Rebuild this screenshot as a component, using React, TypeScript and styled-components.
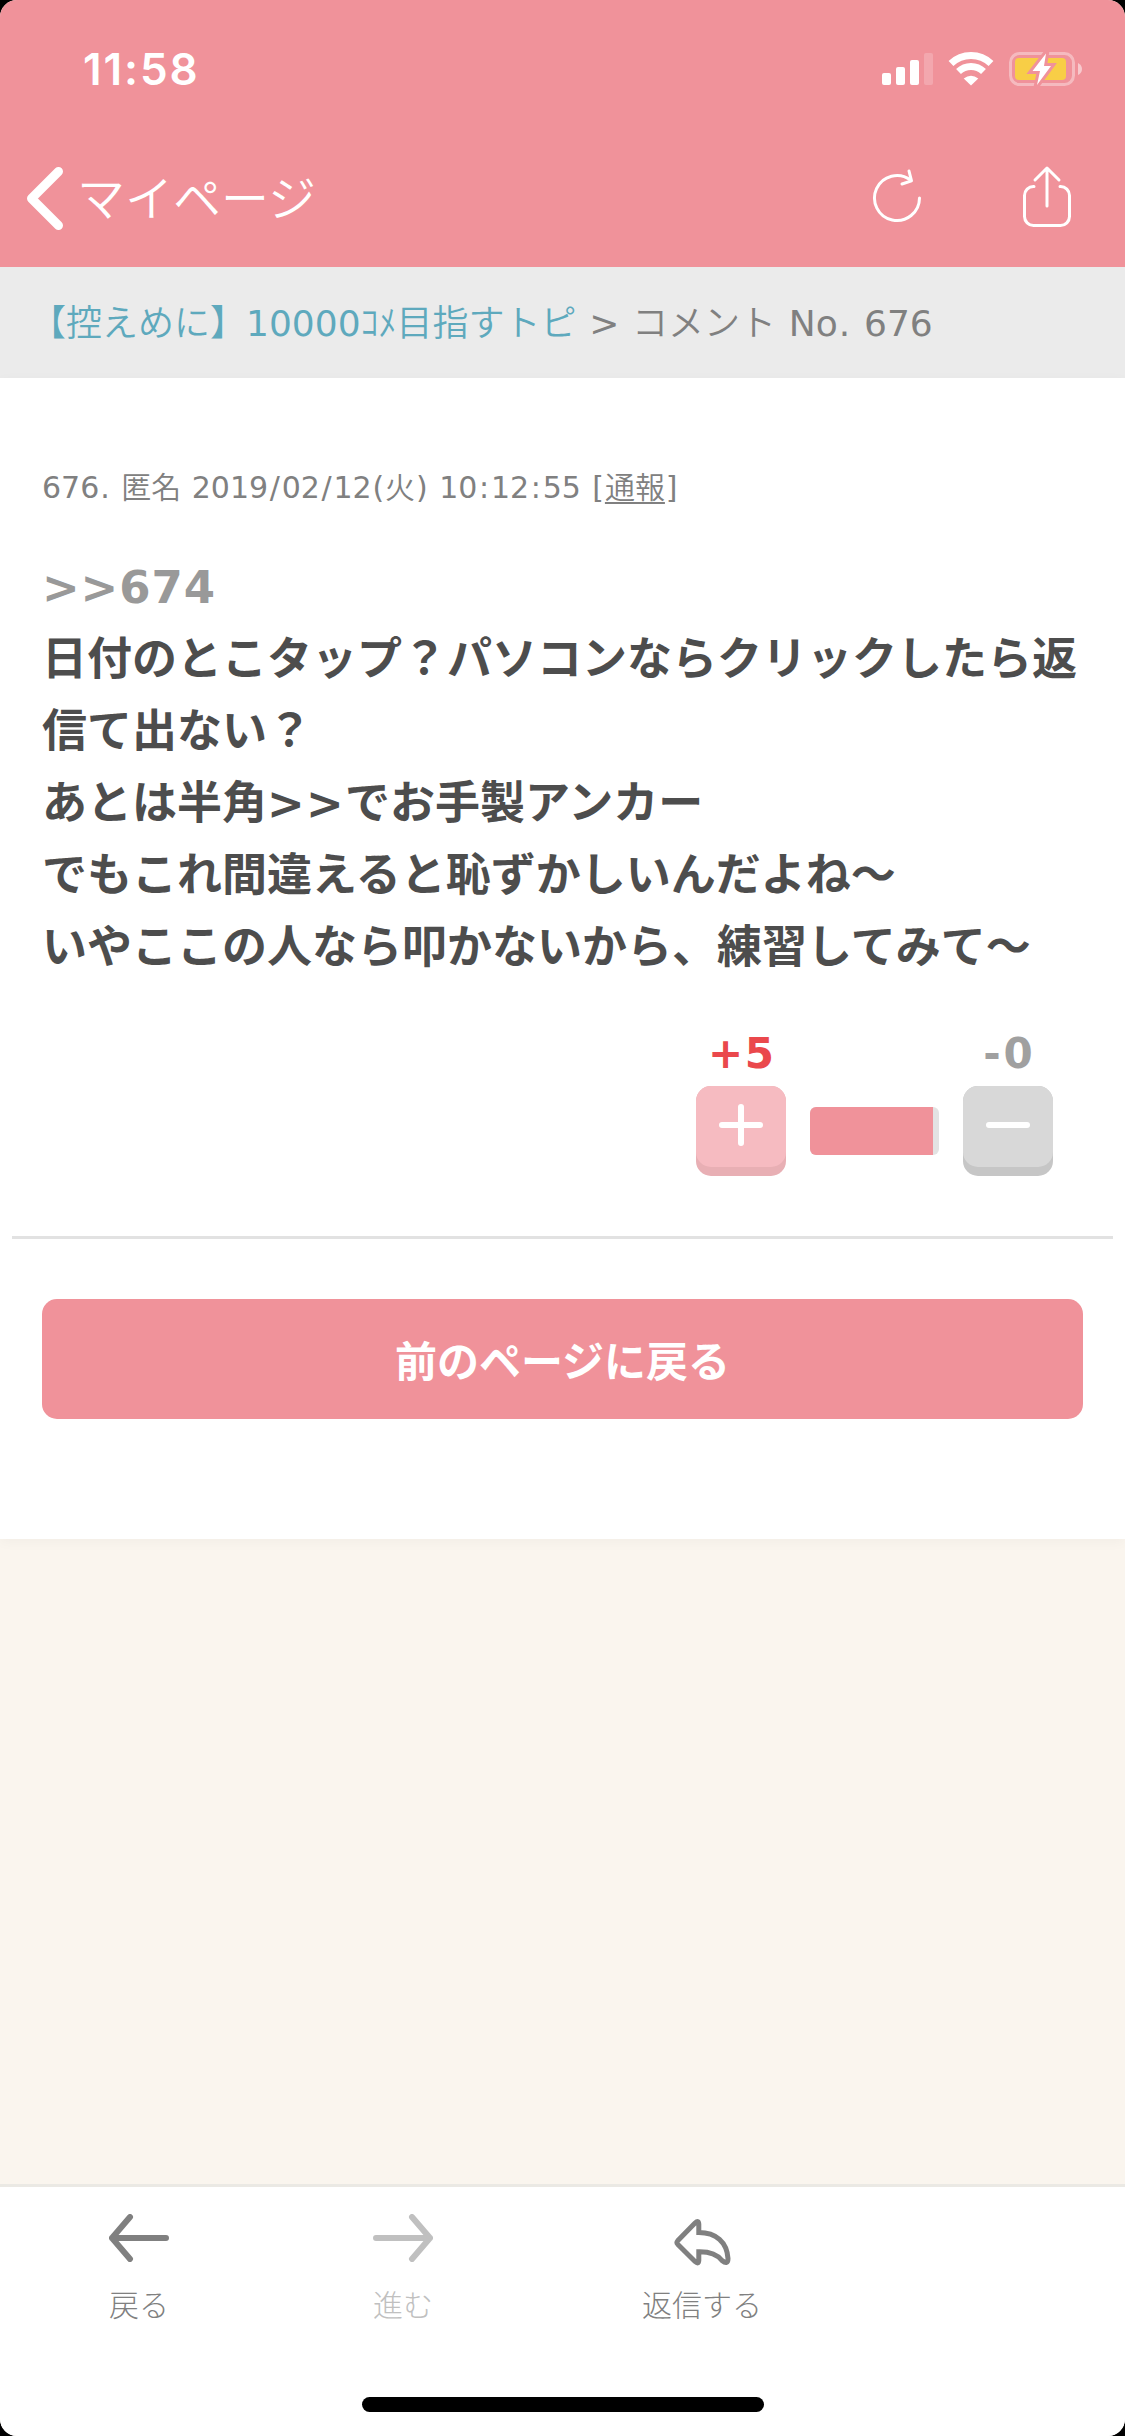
import React from "react";
import styled, { createGlobalStyle } from "styled-components";

const PINK = "#f0929a";
const GRAY = "#808080";

const GlobalStyle = createGlobalStyle`
  *, *::before, *::after { box-sizing: border-box; }
  html, body { margin: 0; padding: 0; background: #000; }
  body { font-family: "DejaVu Sans", "Noto Sans CJK JP", sans-serif; }
  svg { display: block; flex: none; }
  button { border: 0; padding: 0; margin: 0; background: none; font: inherit; color: inherit; }
`;

const Screen = styled.div`
  width: 1125px;
  height: 2436px;
  display: flex;
  flex-direction: column;
  overflow: hidden;
  border-radius: 17px;
  background: #faf5ee;
`;

const Header = styled.header`
  height: 267px;
  flex: none;
  background: ${PINK};
  color: #fff;
`;

const StatusBar = styled.div`
  height: 138px;
  display: flex;
  align-items: center;
  justify-content: space-between;
  padding: 0 43px 0 83px;
`;

const Clock = styled.span`
  font-family: Inter, sans-serif;
  font-size: 44px;
  font-weight: 600;
  letter-spacing: 1.9px;
  line-height: 1;
`;

const StatusIcons = styled.div`
  display: flex;
  align-items: center;
  gap: 15px;
`;

const NavBar = styled.nav`
  height: 120px;
  display: flex;
  align-items: center;
  justify-content: space-between;
  padding: 0 48px 0 27px;
`;

const BackButton = styled.button`
  display: flex;
  align-items: center;
  gap: 15px;
  font-family: "Noto Sans CJK JP", sans-serif;
  font-size: 48px;
  font-weight: 350;
  line-height: 60px;
`;

const BackLabel = styled.span`
  margin-left: -1px;
  padding-bottom: 6px;
`;

const NavActions = styled.div`
  display: flex;
  align-items: center;
  gap: 90px;
`;

const Breadcrumb = styled.div`
  height: 111px;
  flex: none;
  display: flex;
  align-items: center;
  padding: 2px 30px 0;
  background: #ebebeb;
  color: ${GRAY};
  font-size: 36px;
  line-height: 54px;
  word-spacing: 0.034em;
  white-space: pre;
`;

const TopicLink = styled.a`
  color: #5ea9bd;
`;

const Jp = styled.span`
  font-family: "Noto Sans CJK JP", sans-serif;
  font-weight: 350;
  line-height: 1;
`;

const Content = styled.main`
  height: 1161px;
  flex: none;
  display: flex;
  flex-direction: column;
  background: #fff;
  box-shadow: 0 3px 12px rgba(0, 0, 0, 0.035);
`;

const Meta = styled.div`
  padding: 87px 42px 0;
  height: 174px;
  color: ${GRAY};
  font-size: 30px;
  line-height: 45px;
  word-spacing: 0.034em;
  white-space: pre;
`;

const Mark = styled.span<{ $pad: number }>`
  padding: 0 ${(p) => p.$pad}em;
`;

const Report = styled.a`
  text-decoration: underline;
  text-decoration-thickness: 2px;
  text-underline-offset: 4px;
`;

const Comment = styled.div`
  padding: 0 42px;
  color: #4d4d4d;
  font-size: 45px;
  font-weight: 700;
  line-height: 72px;
`;

const Line = styled.div`
  height: 72px;
  white-space: nowrap;
`;

const Anchor = styled.a`
  color: #999;
  letter-spacing: 0.9px;
`;

const Arrows = styled.span`
  letter-spacing: 0.029em;
`;

const Votes = styled.div`
  display: flex;
  justify-content: flex-end;
  align-items: flex-end;
  gap: 24px;
  height: 192px;
  padding-right: 72px;
`;

const Vote = styled.div`
  width: 90px;
  display: flex;
  flex-direction: column;
  align-items: center;
  gap: 8px;
`;

const Count = styled.span<{ $color: string; $spacing: number }>`
  color: ${(p) => p.$color};
  font-size: 42px;
  font-weight: 700;
  letter-spacing: ${(p) => p.$spacing}px;
  margin-right: -${(p) => p.$spacing}px;
  line-height: 48px;
`;

const VoteButton = styled.button<{ $face: string; $edge: string }>`
  width: 90px;
  height: 90px;
  display: flex;
  justify-content: center;
  padding-top: 18px;
  border-radius: 15px;
  background: ${(p) => p.$edge};
  position: relative;

  &::before {
    content: "";
    position: absolute;
    inset: 0 0 9px;
    border-radius: 15px;
    background: ${(p) => p.$face};
  }

  svg { position: relative; }
`;

const Meter = styled.div`
  width: 129px;
  height: 48px;
  margin-bottom: 21px;
  border-radius: 6px;
  overflow: hidden;
  background: #e3e3e3;
`;

const MeterFill = styled.div`
  width: 123px;
  height: 48px;
  background: ${PINK};
`;

const Divider = styled.hr`
  width: 1101px;
  height: 3px;
  flex: none;
  margin: 60px 12px;
  border: 0;
  background: #e2e2e2;
`;

const ReturnButton = styled.button`
  height: 120px;
  margin: 0 42px;
  border-radius: 15px;
  background: ${PINK};
  color: #fff;
  font-family: "Noto Sans CJK JP", sans-serif;
  font-size: 42px;
  font-weight: 700;
  line-height: 120px;
`;

const Spacer = styled.div`
  flex: 1;
`;

const Toolbar = styled.footer`
  height: 252px;
  flex: none;
  display: flex;
  flex-direction: column;
  align-items: center;
  justify-content: space-between;
  padding-bottom: 24px;
  border-top: 3px solid #ebe9e4;
  background: #fff;
`;

const Tabs = styled.div`
  width: 1125px;
  display: flex;
  padding-left: 7px;
`;

const Tab = styled.button<{ $width: number; $color: string }>`
  width: ${(p) => p.$width}px;
  height: 150px;
  display: flex;
  flex-direction: column;
  align-items: center;
  padding-top: 27px;
  gap: 19px;
  color: ${(p) => p.$color};
  font-family: "Noto Sans CJK JP", sans-serif;
  font-size: 30px;
  font-weight: 300;
  line-height: 45px;
`;

const ReplyGlyph = styled.svg`
  margin: 4px 0 -4px;
`;

const HomeIndicator = styled.div`
  width: 402px;
  height: 15px;
  border-radius: 8px;
  background: #000;
`;

const SignalIcon = () => (
  <svg width="51" height="34" viewBox="0 0 51 34" fill="#fff">
    <rect x="0" y="21" width="9" height="12" rx="2" />
    <rect x="14" y="15" width="9" height="18" rx="2" />
    <rect x="28" y="8" width="9" height="25" rx="2" />
    <rect x="42" y="1" width="9" height="32" rx="2" opacity="0.2" />
  </svg>
);

const WifiIcon = () => (
  <svg width="46" height="34" viewBox="0 0 46 34" fill="none" stroke="#fff" strokeWidth="7">
    <path d="M3 11.5 A29 29 0 0 1 43 11.5" />
    <path d="M10.5 19.5 A18 18 0 0 1 35.5 19.5" />
    <path d="M15.7 26.5 Q23 21 30.3 26.5 L23 33.5 Z" fill="#fff" stroke="none" />
  </svg>
);

const BatteryIcon = () => (
  <svg width="73" height="34" viewBox="0 0 73 34">
    <rect x="1.5" y="1.5" width="63" height="31" rx="9" fill="none" stroke="#fff" strokeOpacity="0.37" strokeWidth="3" />
    <path d="M69 11 Q73 13 73 17 Q73 21 69 23 Z" fill="#fff" fillOpacity="0.5" />
    <rect x="6" y="6" width="51" height="22" rx="4" fill="#f8ce46" />
    <path d="M37 1.5 L23.5 19 H31 L28 33 L42 14 H35 Z" fill="#fff" stroke={PINK} strokeWidth="6" strokeLinejoin="miter" strokeMiterlimit="10" paintOrder="stroke" />
  </svg>
);

const ChevronIcon = () => (
  <svg width="36" height="63" viewBox="0 0 36 63" fill="none" stroke="#fff" strokeWidth="9" strokeLinecap="round" strokeLinejoin="round">
    <path d="M31.5 4.5 L4.5 31.5 L31.5 58.5" />
  </svg>
);

const RefreshIcon = () => (
  <svg width="60" height="66" viewBox="0 0 60 66" fill="none" stroke="#fff" strokeWidth="3" strokeLinecap="round" strokeLinejoin="round">
    <path d="M52.5 33 A22.5 22.5 0 1 1 43.5 15" />
    <path d="M42 6 L44.5 15.8 L35 19" />
  </svg>
);

const ShareIcon = () => (
  <svg width="60" height="66" viewBox="0 0 60 66" fill="none" stroke="#fff" strokeWidth="3" strokeLinecap="round" strokeLinejoin="round">
    <path d="M17 21.5 H16.5 A9 9 0 0 0 7.5 30.5 V51.5 A9 9 0 0 0 16.5 60.5 H43.5 A9 9 0 0 0 52.5 51.5 V30.5 A9 9 0 0 0 43.5 21.5 H43" />
    <path d="M30 41 V4 M18 15 L30 3 L42 15" />
  </svg>
);

const PlusIcon = () => (
  <svg width="44" height="42" viewBox="0 0 44 42" stroke="#fff" strokeWidth="6" strokeLinecap="round">
    <path d="M3 21 H41 M22 3 V39" />
  </svg>
);

const MinusIcon = () => (
  <svg width="44" height="42" viewBox="0 0 44 42" stroke="#fff" strokeWidth="6" strokeLinecap="round">
    <path d="M3 21 H41" />
  </svg>
);

const ArrowIcon = ({ forward = false }: { forward?: boolean }) => (
  <svg width="60" height="48" viewBox="0 0 60 48" fill="none" stroke="currentColor" strokeWidth="6" strokeLinecap="round" strokeLinejoin="round">
    <path d={forward ? "M3 24 H57 M39 3 L57 24 L39 45" : "M57 24 H3 M21 3 L3 24 L21 45"} />
  </svg>
);

const ReplyIcon = () => (
  <ReplyGlyph width="57" height="48" viewBox="0 0 57 48" fill="none" stroke="currentColor" strokeWidth="5">
    <path d="M24.8 14.5 V6 Q24.6 1.8 21 5 L3.7 22.8 Q2.2 24.5 3.7 26.2 L21 43.5 Q24.6 46.8 24.8 42.5 V33.7 C36 33.5 43 36 48 42.5 Q54 47.5 54 40.5 C53 24 42 14.5 24.8 14.5 Z" />
  </ReplyGlyph>
);

/* Gives date and bracket punctuation a wider set than the digits around it. */
const Stamp = ({ text }: { text: string }) => (
  <>
    {text.split(/([/:.()[\]])/).map((part, i) => {
      if (part === "/" || part === ":") return <Mark key={i} $pad={0.058}>{part}</Mark>;
      if (/^[.()[\]]$/.test(part)) return <Mark key={i} $pad={0.03}>{part}</Mark>;
      return part;
    })}
  </>
);

export default function App() {
  return (
    <>
      <GlobalStyle />
      <Screen>
        <Header>
          <StatusBar>
            <Clock>11:58</Clock>
            <StatusIcons>
              <SignalIcon />
              <WifiIcon />
              <BatteryIcon />
            </StatusIcons>
          </StatusBar>
          <NavBar>
            <BackButton>
              <ChevronIcon />
              <BackLabel>マイページ</BackLabel>
            </BackButton>
            <NavActions>
              <RefreshIcon />
              <ShareIcon />
            </NavActions>
          </NavBar>
        </Header>
        <Breadcrumb>
          <TopicLink><Jp>【控えめに】</Jp>10000<Jp>ｺﾒ目指すトピ</Jp></TopicLink>
          <span>{" > "}<Jp>コメント</Jp>{" No"}<Stamp text="." />{" 676"}</span>
        </Breadcrumb>
        <Content>
          <Meta>
            <Stamp text="676. " /><Jp>匿名</Jp><Stamp text=" 2019/02/12(" /><Jp>火</Jp><Stamp text=") 10:12:55 [" /><Report><Jp>通報</Jp></Report><Stamp text="]" />
          </Meta>
          <Comment>
            <Line><Anchor>&gt;&gt;674</Anchor></Line>
            <Line>日付のとこタップ？パソコンならクリックしたら返</Line>
            <Line>信て出ない？</Line>
            <Line>あとは半角<Arrows>&gt;&gt;</Arrows>でお手製アンカー</Line>
            <Line>でもこれ間違えると恥ずかしいんだよね〜</Line>
            <Line>いやここの人なら叩かないから、練習してみて〜</Line>
          </Comment>
          <Votes>
            <Vote>
              <Count $color="#ea484c" $spacing={1.5}>+5</Count>
              <VoteButton $face="#f6bbc1" $edge="#e8afb4"><PlusIcon /></VoteButton>
            </Vote>
            <Meter><MeterFill /></Meter>
            <Vote>
              <Count $color="#a0a0a0" $spacing={3}>-0</Count>
              <VoteButton $face="#d8d8d8" $edge="#c6c6c6"><MinusIcon /></VoteButton>
            </Vote>
          </Votes>
          <Divider />
          <ReturnButton>前のページに戻る</ReturnButton>
        </Content>
        <Spacer />
        <Toolbar>
          <Tabs>
            <Tab $width={264} $color={GRAY}><ArrowIcon />戻る</Tab>
            <Tab $width={264} $color="#c0c0c0"><ArrowIcon forward />進む</Tab>
            <Tab $width={334} $color={GRAY}><ReplyIcon />返信する</Tab>
          </Tabs>
          <HomeIndicator />
        </Toolbar>
      </Screen>
    </>
  );
}
